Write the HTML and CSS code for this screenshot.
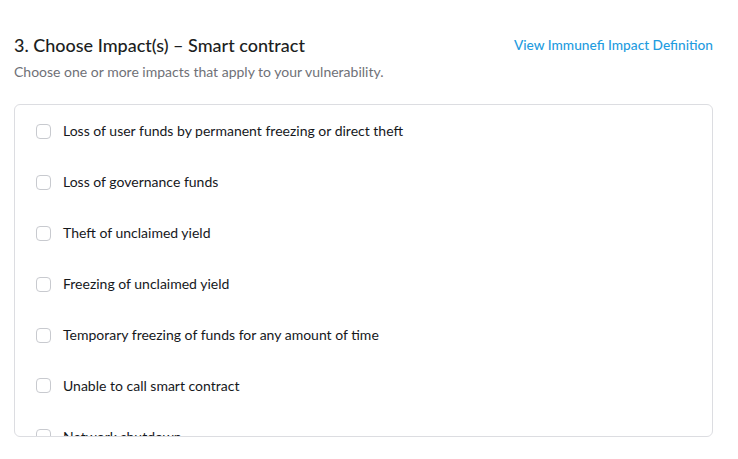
FILE: index.html
```html
<!DOCTYPE html>
<html>
<head>
<meta charset="utf-8">
<link rel="stylesheet" href="styles.css">
</head>
<body>
<div class="page">
  <div class="header">
    <div class="titles">
      <h2 class="title">3. Choose Impact(s) – Smart contract</h2>
      <p class="subtitle">Choose one or more impacts that apply to your vulnerability.</p>
    </div>
    <a class="link" href="#">View Immunefi Impact Definition</a>
  </div>
  <div class="box">
    <div class="list">
      <label class="row"><span class="check"></span><span class="label">Loss of user funds by permanent freezing or direct theft</span></label>
      <label class="row"><span class="check"></span><span class="label">Loss of governance funds</span></label>
      <label class="row"><span class="check"></span><span class="label">Theft of unclaimed yield</span></label>
      <label class="row"><span class="check"></span><span class="label">Freezing of unclaimed yield</span></label>
      <label class="row"><span class="check"></span><span class="label">Temporary freezing of funds for any amount of time</span></label>
      <label class="row"><span class="check"></span><span class="label">Unable to call smart contract</span></label>
      <label class="row"><span class="check"></span><span class="label">Network shutdown</span></label>
      <label class="row"><span class="check"></span><span class="label">Griefing</span></label>
    </div>
  </div>
</div>
</body>
</html>
```
FILE: styles.css
```css
* { box-sizing: border-box; }
html, body { margin: 0; padding: 0; background: #fff; }
body { font-family: "Lato", "Noto Sans", sans-serif; color: #1c1e22; }
.page { width: 699px; margin-left: 14px; padding-top: 34px; }
.header { display: flex; justify-content: space-between; align-items: flex-start; }
.title { margin: 0; font-size: 18px; font-weight: 500; line-height: 22px; color: #1c1e22; }
.subtitle { margin: 7px 0 0; font-size: 14px; line-height: 18px; color: #6f7177; }
.link { font-size: 13.7px; line-height: 18px; margin-top: 2px; color: #1f9ce0; text-decoration: none; font-weight: 500; }
.box { margin-top: 23px; height: 333px; border: 1px solid #dcdde1; border-radius: 6px; overflow: hidden; }
.list { display: flex; flex-direction: column; padding-top: 1px; }
.row { display: flex; align-items: center; height: 50.9px; padding-left: 21px; gap: 12px; }
.check { width: 15px; height: 15px; border: 1px solid #c8cacf; border-radius: 4px; flex: none; }
.label { font-size: 14px; line-height: 16px; color: #16181c; }
```
